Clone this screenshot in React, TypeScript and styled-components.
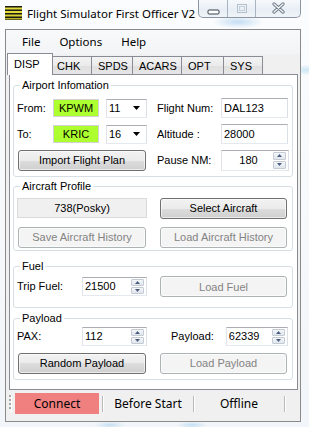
import React from "react";
import styled, { createGlobalStyle } from "styled-components";

const GlobalStyle = createGlobalStyle`
  html, body { margin: 0; padding: 0; }
  body {
    background: #f6f8fb;
    font-family: "Liberation Sans", Arial, sans-serif;
    font-size: 11px;
    color: #000;
  }
  * { box-sizing: border-box; }
`;

const Frame = styled.div`
  width: 309px;
  height: 427px;
  overflow: hidden;
  display: flex;
  flex-direction: column;
  padding: 0 8px 5px 5px;
  background:
    radial-gradient(ellipse 36px 9px at 238px 22px, rgba(140, 190, 235, 0.5), transparent 70%),
    radial-gradient(ellipse 24px 8px at 306px 70px, rgba(150, 205, 235, 0.45), transparent 70%),
    radial-gradient(ellipse 22px 5px at 110px 425px, rgba(150, 200, 235, 0.5), transparent 70%),
    radial-gradient(ellipse 22px 5px at 192px 425px, rgba(150, 200, 235, 0.5), transparent 70%),
    linear-gradient(#fbfcfd, #f2f5f9);
`;

const TitleBar = styled.div`
  height: 29px;
  display: flex;
  align-items: flex-start;
  flex-shrink: 0;
`;

const AppIcon = styled.svg`
  margin-top: 6px;
  flex-shrink: 0;
`;

const Caption = styled.div`
  margin: 6px 0 0 5px;
  font-family: "Noto Sans", "Open Sans", sans-serif;
  font-size: 11.5px;
  line-height: 16px;
  white-space: nowrap;
`;

const Controls = styled.div`
  margin-left: auto;
  margin-top: -1px;
  height: 19px;
  flex-shrink: 0;
  display: flex;
  border: 1px solid #8d97a4;
  border-top: none;
  border-radius: 0 0 5px 5px;
  overflow: hidden;
  background: linear-gradient(#f8fafc, #e8eef5 60%, #f0f4f8);
`;

const CtrlButton = styled.div<{ $w: number }>`
  width: ${(p) => p.$w}px;
  display: flex;
  align-items: center;
  justify-content: center;
  & + & {
    border-left: 1px solid #aab4c0;
  }
`;

const Client = styled.div`
  flex: 1;
  display: flex;
  flex-direction: column;
  border: 1px solid #8a8a8a;
  background: #f0f0f0;
`;

const MenuBar = styled.div`
  height: 24px;
  flex-shrink: 0;
  display: flex;
  align-items: center;
  padding-left: 6.5px;
  background: linear-gradient(#f8f9fa, #f3f4f6);
`;

const MenuItem = styled.div`
  padding: 0 9.5px;
  font-family: "Noto Sans", "Open Sans", sans-serif;
  font-size: 11.5px;
  line-height: 18px;
`;

const TabStrip = styled.div`
  height: 21px;
  flex-shrink: 0;
  margin: 0 2px -1px 3px;
  display: flex;
  align-items: flex-end;
  position: relative;
  z-index: 1;
`;

const Tab = styled.div<{ $w: number; $active?: boolean }>`
  width: ${(p) => p.$w}px;
  height: ${(p) => (p.$active ? 22 : 19)}px;
  margin-left: ${(p) => (p.$active ? -2 : -1)}px;
  margin-right: ${(p) => (p.$active ? -2 : 0)}px;
  padding: ${(p) => (p.$active ? 4 : 3)}px 0 0 6px;
  border: 1px solid #898c95;
  border-bottom: ${(p) => (p.$active ? "none" : "1px solid #898c95")};
  background: ${(p) =>
    p.$active ? "#fff" : "linear-gradient(#f3f3f3, #ebebeb 50%, #dfdfdf 50%, #e6e6e6)"};
  position: relative;
  z-index: ${(p) => (p.$active ? 2 : 1)};
  line-height: 13px;
  white-space: nowrap;
  &:first-child {
    margin-left: -2px;
  }
`;

const Panel = styled.div`
  height: 316px;
  flex-shrink: 0;
  margin: 0 2px 0 3px;
  border: 1px solid #898c95;
  background: #fff;
  padding: 4px 4px 0 3px;
`;

const Group = styled.fieldset<{ $mt: number; $pt: number; $pb: number }>`
  margin: ${(p) => p.$mt}px 0 0;
  padding: ${(p) => p.$pt}px 3px ${(p) => p.$pb}px 3px;
  border: 1px solid #d5dfe5;
  border-radius: 3px;
  min-width: 0;
`;

const Legend = styled.legend`
  margin-left: 3px;
  padding: 0 2px;
  line-height: 13px;
`;

const Grid = styled.div<{ $cols: string; $rows: string; $gap: number }>`
  display: grid;
  grid-template-columns: ${(p) => p.$cols};
  grid-template-rows: ${(p) => p.$rows};
  row-gap: ${(p) => p.$gap}px;
  align-items: center;
`;

const Label = styled.div<{ $ml?: number }>`
  margin-left: ${(p) => p.$ml ?? 0}px;
  white-space: nowrap;
  line-height: 13px;
`;

const Cell = styled.div<{ $span?: string; $ml?: number }>`
  grid-column: ${(p) => p.$span ?? "auto"};
  margin-left: ${(p) => p.$ml ?? 0}px;
  display: flex;
  align-items: center;
  height: 100%;
`;

const CodeBox = styled.div`
  width: 46px;
  height: 18px;
  background: #adff2f;
  border: 1px solid #d2d2d2;
  text-align: center;
  line-height: 16px;
`;

const Combo = styled.div`
  width: 41px;
  height: 19px;
  display: flex;
  align-items: center;
  justify-content: space-between;
  padding: 0 6px 0 2px;
  background: #fff;
  border: 1px solid;
  border-color: #abadb3 #dbdfe6 #e3e9ef #e2e3ea;
`;

const TextBox = styled.div<{ $w: number }>`
  width: ${(p) => p.$w}px;
  height: 20px;
  padding-left: 2px;
  line-height: 18px;
  background: #fff;
  border: 1px solid;
  border-color: #abadb3 #dbdfe6 #e3e9ef #e2e3ea;
`;

const SpinBox = styled.div<{ $w: number; $h: number }>`
  width: ${(p) => p.$w}px;
  height: ${(p) => p.$h}px;
  display: flex;
  background: #fff;
  border: 1px solid;
  border-color: #abadb3 #dbdfe6 #e3e9ef #e2e3ea;
`;

const SpinText = styled.div<{ $center?: boolean }>`
  flex: 1;
  padding-left: 2px;
  text-align: ${(p) => (p.$center ? "center" : "left")};
  align-self: center;
  line-height: 13px;
`;

const SpinButtons = styled.div`
  width: 13px;
  margin: 1px 2px 1px 0;
  display: flex;
  flex-direction: column;
  gap: 1px;
`;

const SpinArrow = styled.div`
  flex: 1;
  display: flex;
  align-items: center;
  justify-content: center;
  border: 1px solid #c5cbd4;
  border-radius: 1px;
  background: linear-gradient(#f4f6f9, #e1e6ee);
`;

const Button = styled.div<{ $disabled?: boolean; $w: number }>`
  width: ${(p) => p.$w}px;
  height: 21px;
  margin-left: 1px;
  display: flex;
  align-items: center;
  justify-content: center;
  border: 1px solid ${(p) => (p.$disabled ? "#adb2b5" : "#707070")};
  border-radius: 3px;
  color: ${(p) => (p.$disabled ? "#838383" : "#000")};
  background: ${(p) =>
    p.$disabled
      ? "#f4f4f4"
      : "linear-gradient(#f2f2f2, #ebebeb 50%, #dddddd 50%, #cfcfcf)"};
  box-shadow: inset 0 0 0 1px ${(p) => (p.$disabled ? "#fbfbfb" : "rgba(255,255,255,0.6)")};
  white-space: nowrap;
`;

const InfoBox = styled.div`
  width: 130px;
  height: 20px;
  background: #f0f0f0;
  border: 1px solid #dadada;
  text-align: center;
  line-height: 18px;
`;

const StatusStrip = styled.div`
  flex: 1;
  display: flex;
  align-items: flex-start;
  padding: 3px 0 0 3px;
  background: #f0f0f0;
  font-family: "Noto Sans", "Open Sans", sans-serif;
  font-size: 12px;
`;

const Grip = styled.div`
  width: 2px;
  height: 16px;
  margin: 2px 4px 0 0;
  background: repeating-linear-gradient(#a8a8a8 0 2px, transparent 2px 4px);
  box-shadow: 1px 1px 0 #fff;
`;

const StatusItem = styled.div<{ $bg?: string }>`
  width: 84px;
  height: 21px;
  line-height: 21px;
  text-align: center;
  background: ${(p) => p.$bg ?? "transparent"};
`;

const Separator = styled.div`
  width: 7px;
  height: 16px;
  margin-top: 3px;
  display: flex;
  justify-content: center;
  &::before {
    content: "";
    width: 1px;
    background: #b9b9b9;
    box-shadow: 1px 0 0 #fff;
  }
`;

const Arrow = ({ up }: { up?: boolean }) => (
  <svg width="5" height="3" viewBox="0 0 5 3">
    <polygon points={up ? "2.5,0 5,3 0,3" : "0,0 5,0 2.5,3"} fill="#4b5d7e" />
  </svg>
);

const Spinner = ({ value, w, h, center }: { value: string; w: number; h: number; center?: boolean }) => (
  <SpinBox $w={w} $h={h}>
    <SpinText $center={center}>{value}</SpinText>
    <SpinButtons>
      <SpinArrow>
        <Arrow up />
      </SpinArrow>
      <SpinArrow>
        <Arrow />
      </SpinArrow>
    </SpinButtons>
  </SpinBox>
);

const DropDown = ({ value }: { value: string }) => (
  <Combo>
    <span>{value}</span>
    <svg width="7" height="4" viewBox="0 0 7 4">
      <polygon points="0,0 7,0 3.5,4" fill="#000" />
    </svg>
  </Combo>
);

const tabs = [
  { name: "DISP", w: 46 },
  { name: "CHK", w: 42 },
  { name: "SPDS", w: 42 },
  { name: "ACARS", w: 50 },
  { name: "OPT", w: 43 },
  { name: "SYS", w: 40 },
];

export default function App() {
  return (
    <>
      <GlobalStyle />
      <Frame>
        <TitleBar>
          <AppIcon width="17" height="14" viewBox="0 0 17 14">
            <rect width="17" height="14" fill="#1b1b14" />
            <rect y="1.5" width="17" height="2" fill="#e2dc3a" />
            <rect y="5" width="17" height="2" fill="#e2dc3a" />
            <rect y="8.5" width="17" height="2" fill="#d8d232" />
            <rect y="12" width="17" height="1.5" fill="#b8b22a" />
          </AppIcon>
          <Caption>Flight Simulator First Officer V2</Caption>
          <Controls>
            <CtrlButton $w={28}>
              <svg width="13" height="16" viewBox="0 0 13 16">
                <rect x="1" y="10" width="11" height="4" rx="1" fill="#fff" stroke="#34404e" />
              </svg>
            </CtrlButton>
            <CtrlButton $w={28}>
              <svg width="12" height="16" viewBox="0 0 12 16">
                <rect x="1.5" y="4.5" width="9" height="8" fill="none" stroke="#b4c0cc" />
                <rect x="3.5" y="6.5" width="5" height="4" fill="none" stroke="#c6d0da" />
              </svg>
            </CtrlButton>
            <CtrlButton $w={45}>
              <svg width="13" height="16" viewBox="0 0 13 16">
                <path
                  d="M2 4 L11 12 M11 4 L2 12"
                  stroke="#6d7886"
                  strokeWidth="3.2"
                  strokeLinecap="round"
                />
                <path
                  d="M2 4 L11 12 M11 4 L2 12"
                  stroke="#f4f6f8"
                  strokeWidth="1.4"
                  strokeLinecap="round"
                />
              </svg>
            </CtrlButton>
          </Controls>
        </TitleBar>

        <Client>
          <MenuBar>
            <MenuItem>File</MenuItem>
            <MenuItem>Options</MenuItem>
            <MenuItem>Help</MenuItem>
          </MenuBar>

          <TabStrip>
            {tabs.map((t, i) => (
              <Tab key={t.name} $w={t.w} $active={i === 0}>
                {t.name}
              </Tab>
            ))}
          </TabStrip>

          <Panel>
            <Group $mt={0} $pt={6} $pb={6}>
              <Legend>Airport Infomation</Legend>
              <Grid $cols="36px 53px 51px 64px 67px" $rows="20px 20px 20px" $gap={6}>
                <Label>From:</Label>
                <CodeBox>KPWM</CodeBox>
                <DropDown value="11" />
                <Label>Flight Num:</Label>
                <TextBox $w={67}>DAL123</TextBox>

                <Label>To:</Label>
                <CodeBox>KRIC</CodeBox>
                <DropDown value="16" />
                <Label>Altitude :</Label>
                <TextBox $w={67}>28000</TextBox>

                <Cell $span="1 / 4">
                  <Button $w={128}>Import Flight Plan</Button>
                </Cell>
                <Label>Pause NM:</Label>
                <Spinner value="180" w={68} h={21} center />
              </Grid>
            </Group>

            <Group $mt={3} $pt={5} $pb={3}>
              <Legend>Aircraft Profile</Legend>
              <Grid $cols="142px 127px" $rows="20px 20px" $gap={9}>
                <InfoBox>738(Posky)</InfoBox>
                <Button $w={127}>Select Aircraft</Button>
                <Button $w={128} $disabled>
                  Save Aircraft History
                </Button>
                <Button $w={127} $disabled>
                  Load Aircraft History
                </Button>
              </Grid>
            </Group>

            <Group $mt={9} $pt={3} $pb={10}>
              <Legend>Fuel</Legend>
              <Grid $cols="65px 77px 127px" $rows="21px" $gap={0}>
                <Label>Trip Fuel:</Label>
                <Spinner value="21500" w={65} h={19} />
                <Button $w={127} $disabled>
                  Load Fuel
                </Button>
              </Grid>
            </Group>

            <Group $mt={4} $pt={2} $pb={6}>
              <Legend>Payload</Legend>
              <Grid $cols="65px 77px 127px" $rows="19px 20px" $gap={7}>
                <Label>PAX:</Label>
                <Spinner value="112" w={65} h={19} />
                <Cell>
                  <Label $ml={12}>Payload:</Label>
                  <Cell $ml={12}>
                    <Spinner value="62339" w={62} h={19} />
                  </Cell>
                </Cell>
                <Cell $span="1 / 3">
                  <Button $w={128}>Random Payload</Button>
                </Cell>
                <Button $w={127} $disabled>
                  Load Payload
                </Button>
              </Grid>
            </Group>
          </Panel>

          <StatusStrip>
            <Grip />
            <StatusItem $bg="#f08080">Connect</StatusItem>
            <Separator />
            <StatusItem>Before Start</StatusItem>
            <Separator />
            <StatusItem>Offline</StatusItem>
            <Separator />
          </StatusStrip>
        </Client>
      </Frame>
    </>
  );
}
